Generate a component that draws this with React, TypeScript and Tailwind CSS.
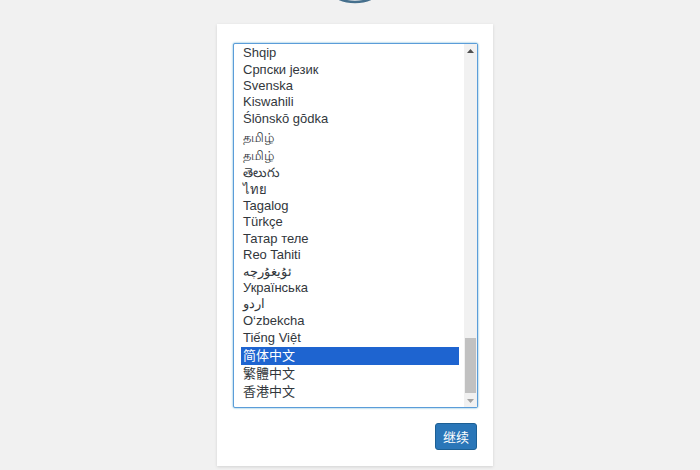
const languages = [
  { label: "Shqip", h: "h-[17px]" },
  { label: "Српски језик", h: "h-[17px]" },
  { label: "Svenska", h: "h-[16px]" },
  { label: "Kiswahili", h: "h-[16px]" },
  { label: "Ślōnskō gŏdka", h: "h-[18px]" },
  { label: "தமிழ்", h: "h-[19px]" },
  { label: "தமிழ்", h: "h-[17px]" },
  { label: "తెలుగు", h: "h-[17px]" },
  { label: "ไทย", h: "h-[17px]" },
  { label: "Tagalog", h: "h-[16px]" },
  { label: "Türkçe", h: "h-[16px]" },
  { label: "Татар теле", h: "h-[17px]" },
  { label: "Reo Tahiti", h: "h-[16px]" },
  { label: "ئۇيغۇرچە", h: "h-[17px]" },
  { label: "Українська", h: "h-[16px]" },
  { label: "اردو", h: "h-[16px]" },
  { label: "O‘zbekcha", h: "h-[17px]" },
  { label: "Tiếng Việt", h: "h-[18px]" },
  { label: "简体中文", h: "h-[18px]", selected: true },
  { label: "繁體中文", h: "h-[18px]" },
  { label: "香港中文", h: "h-[18px]" },
];

function LanguageList() {
  return (
    <div className="flex h-[365px] border border-[#5b9dd9] bg-white shadow-[0_0_2px_rgba(30,140,190,0.8)] rounded-[2px]">
      <div className="flex-1 overflow-hidden pl-[7px] pr-[5px]">
        {languages.map((lang, i) => (
          <div
            key={i}
            className={
              lang.selected
                ? `${lang.h} flex items-center pl-[2px] bg-[#1e64d0] text-white`
                : `${lang.h} flex items-center pl-[2px] text-[#32373c]`
            }
          >
            {lang.label}
          </div>
        ))}
      </div>

      {/* fake scrollbar */}
      <div className="flex w-[13px] flex-col bg-[#f1f1f1]">
        <div className="flex h-[13px] items-center justify-center">
          <svg width="7" height="4" viewBox="0 0 7 4">
            <path d="M0 4 L3.5 0 L7 4 Z" fill="#505050" />
          </svg>
        </div>
        <div className="flex-1 flex flex-col px-[1px]">
          <div className="h-[281px]" />
          <div className="h-[55px] bg-[#c1c1c1]" />
        </div>
        <div className="flex h-[13px] items-center justify-center">
          <svg width="7" height="4" viewBox="0 0 7 4">
            <path d="M0 0 L3.5 4 L7 0 Z" fill="#a3a3a3" />
          </svg>
        </div>
      </div>
    </div>
  );
}

export default function App() {
  return (
    <div className="min-h-screen bg-[#f1f1f1] font-['Liberation_Sans','Noto_Sans','Noto_Sans_CJK_SC',sans-serif] text-[13px]">
      <div className="ml-[217px] w-[276px]">
        <div className="flex h-[24px] justify-center">
          <svg width="84" height="24" viewBox="0 0 84 24">
            <circle cx="42" cy="-38" r="40" fill="none" stroke="#46708d" strokeWidth="2.5" />
          </svg>
        </div>

        <div className="h-[442px] bg-white pt-[19px] pl-[16px] pr-[15px] shadow-[0_1px_3px_rgba(0,0,0,0.13)]">
          <LanguageList />

          <div className="mt-[15px] flex justify-end pr-[1px]">
            <button className="h-[27px] rounded-[3px] border border-[#1c5f94] bg-[#2a76b8] px-[7px] text-[13px] text-white font-['Noto_Sans_CJK_SC',sans-serif]">
              继续
            </button>
          </div>
        </div>
      </div>
    </div>
  );
}
